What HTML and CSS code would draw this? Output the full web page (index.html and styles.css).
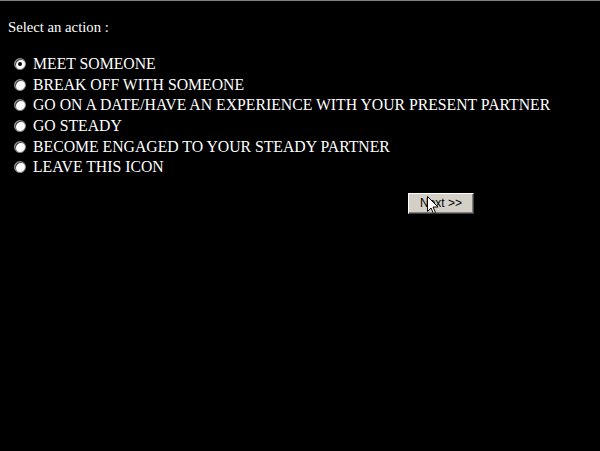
FILE: index.html
```html
<!DOCTYPE html>
<html>
<head>
<meta charset="utf-8">
<link rel="stylesheet" href="styles.css">
</head>
<body>
<div class="page">
  <p class="prompt">Select an action :</p>
  <form class="options">
    <label class="opt"><input type="radio" name="a" checked><span>MEET SOMEONE</span></label>
    <label class="opt"><input type="radio" name="a"><span>BREAK OFF WITH SOMEONE</span></label>
    <label class="opt"><input type="radio" name="a"><span>GO ON A DATE/HAVE AN EXPERIENCE WITH YOUR PRESENT PARTNER</span></label>
    <label class="opt"><input type="radio" name="a"><span>GO STEADY</span></label>
    <label class="opt"><input type="radio" name="a"><span>BECOME ENGAGED TO YOUR STEADY PARTNER</span></label>
    <label class="opt"><input type="radio" name="a"><span>LEAVE THIS ICON</span></label>
    <div class="actions">
      <button type="button" class="next">Next &gt;&gt;
        <svg class="cursor" width="12" height="19" viewBox="0 0 12 19"><path d="M0.5 0.5 L0.5 15.5 L4 12 L6.5 17.5 L8.5 16.5 L6 11 L11 11 Z" fill="#fff" stroke="#000" stroke-width="1"/></svg>
      </button>
    </div>
  </form>
</div>
</body>
</html>
```
FILE: styles.css
```css
html, body {
  margin: 0;
  padding: 0;
  background: #000;
}
body {
  width: 600px;
  height: 451px;
  box-sizing: border-box;
  border-top: 1px solid #808080;
  overflow: hidden;
  font-family: "Liberation Serif", "Times New Roman", serif;
  color: #fff;
}
.page {
  padding: 0 8px;
}
.prompt {
  margin: 0;
  padding-top: 18px;
  font-size: 14.7px;
  line-height: 16px;
}
.options {
  margin-top: 19px;
  display: flex;
  flex-direction: column;
}
.opt {
  display: flex;
  align-items: center;
  height: 20.6px;
  font-size: 15.75px;
  line-height: 20px;
}
.opt input {
  appearance: none;
  -webkit-appearance: none;
  width: 12px;
  height: 12px;
  margin: 0 7px 0 6px;
  border-radius: 50%;
  background: #fff;
  border: 1px solid #808080;
  box-shadow: inset 1px 1px 0 #404040;
  box-sizing: border-box;
  position: relative;
}
.opt input:checked::after {
  content: "";
  position: absolute;
  left: 3px;
  top: 3px;
  width: 4px;
  height: 4px;
  border-radius: 50%;
  background: #000;
}
.actions {
  display: flex;
  padding-left: 400px;
  margin-top: 15px;
}
.next {
  position: relative;
  width: 66px;
  height: 21px;
  padding: 0;
  background: #d4d0c8;
  border: 1px solid;
  border-color: #fff #404040 #404040 #fff;
  box-shadow: inset -1px -1px 0 #808080;
  font-family: "Liberation Sans", Arial, sans-serif;
  font-size: 12px;
  color: #000;
}
.cursor {
  position: absolute;
  left: 18px;
  top: 2px;
}
```
